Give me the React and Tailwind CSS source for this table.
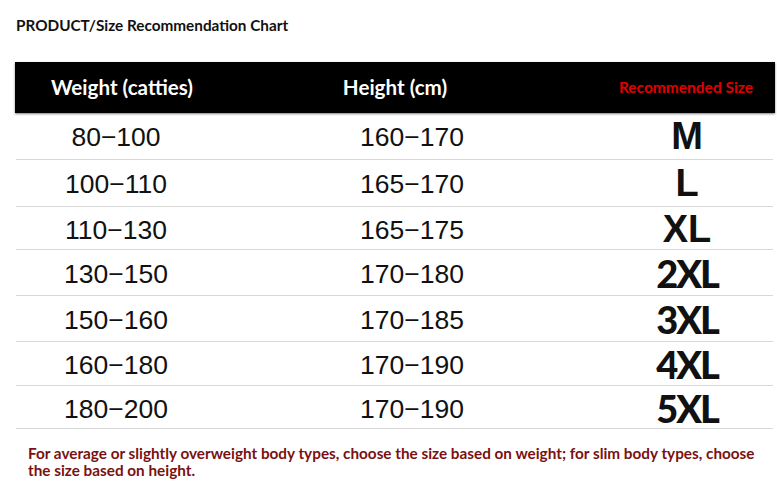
const rows = [
  { w: '80−100', h: '160−170', s: 'M', h2: 'h-[47px]', alt: false },
  { w: '100−110', h: '165−170', s: 'L', h2: 'h-[47px]', alt: false },
  { w: '110−130', h: '165−175', s: 'XL', h2: 'h-[43px]', alt: false },
  { w: '130−150', h: '170−180', s: '2XL', h2: 'h-[46px]', alt: true },
  { w: '150−160', h: '170−185', s: '3XL', h2: 'h-[46px]', alt: true },
  { w: '160−180', h: '170−190', s: '4XL', h2: 'h-[44px]', alt: true },
  { w: '180−200', h: '170−190', s: '5XL', h2: 'h-[43px]', alt: true },
];

const App = () => {
  return (
    <div className="w-[777px] h-[490px] bg-white overflow-hidden font-['Lato',sans-serif]">
      <h1 className="pl-[16px] pt-[15px] text-[15.3px] leading-[20px] font-bold text-[#111]">
        PRODUCT/Size Recommendation Chart
      </h1>

      <div className="ml-[15px] mt-[27px] w-[760px]">
        {/* header bar */}
        <div className="grid grid-cols-[200px_392px_168px] h-[51px] items-center bg-black shadow-[0_1px_2px_rgba(0,0,0,0.5)]">
          <div className="pl-[14px] text-center text-white font-bold text-[20.6px]">Weight (catties)</div>
          <div className="pr-[32px] text-center text-white font-bold text-[20.6px]">Height (cm)</div>
          <div className="pr-[10px] text-center text-[#e00000] font-bold text-[15.5px]">Recommended Size</div>
        </div>

        {rows.map((r) => (
          <div
            key={r.s}
            className={`grid grid-cols-[200px_392px_158px] items-center border-b border-[#d8d8d8] ml-[1px] w-[757px] ${r.h2}`}
          >
            <div className="text-center text-[26.5px] text-[#111] font-['Liberation_Sans',sans-serif] pt-[4px]">{r.w}</div>
            <div className="text-center text-[26.5px] text-[#111] font-['Liberation_Sans',sans-serif] pt-[4px]">{r.h}</div>
            <div
              className={
                r.alt
                  ? "text-center text-[38px] leading-[40px] font-black tracking-[-2px] text-[#111] font-['Lato',sans-serif]"
                  : "text-center text-[38px] leading-[40px] font-bold text-[#111] font-['Liberation_Sans',sans-serif]"
              }
            >
              {r.s}
            </div>
          </div>
        ))}
      </div>

      <p className="pl-[28px] pr-[18px] mt-[16px] text-[15.3px] leading-[17px] font-bold text-[#7a1111]">
        For average or slightly overweight body types, choose the size based on weight; for slim body types, choose the size based on height.
      </p>
    </div>
  );
};

export default App;
